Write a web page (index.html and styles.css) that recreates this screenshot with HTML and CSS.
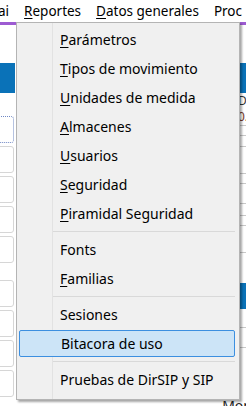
FILE: index.html
```html
<!DOCTYPE html>
<html lang="es">
<head>
  <meta charset="UTF-8">
  <title>Reportes</title>
  <link rel="stylesheet" href="styles.css">
</head>
<body>
  <div class="menubar">
    <span class="mb-item first">ai</span>
    <span class="mb-item"><u>R</u>eportes</span>
    <span class="mb-item"><u>D</u>atos generales</span>
    <span class="mb-item">Proc</span>
  </div>
  <div class="accent"></div>

  <div class="workspace">
    <div class="pane left">
      <div class="bluebar"></div>
      <div class="fields">
        <div class="field focus"></div>
        <div class="field"></div>
        <div class="field"></div>
        <div class="field"></div>
        <div class="field"></div>
      </div>
      <div class="fields second">
        <div class="field"></div>
        <div class="field"></div>
        <div class="field"></div>
        <div class="field"></div>
      </div>
    </div>
    <div class="pane right">
      <div class="bluebar"></div>
      <div class="cell">D</div>
      <div class="cell red">0.</div>
      <div class="rule r1"></div>
      <div class="rule r2"></div>
      <div class="rule r3"></div>
      <div class="rule r4"></div>
      <div class="rule r5"></div>
      <div class="rule r6"></div>
      <div class="rule r7"></div>
      <div class="rule r8"></div>
      <div class="rule r9"></div>
      <div class="bluebar small"></div>
      <div class="rule r10"></div>
      <div class="rule r11"></div>
    </div>
  </div>
  <div class="peek">Mon</div>

  <!-- menu desplegado de Reportes -->
  <div class="dropdown">
    <div class="item"><span><u>P</u>arámetros</span></div>
    <div class="item"><span><u>T</u>ipos de movimiento</span></div>
    <div class="item"><span><u>U</u>nidades de medida</span></div>
    <div class="item"><span><u>A</u>lmacenes</span></div>
    <div class="item"><span><u>U</u>suarios</span></div>
    <div class="item"><span><u>S</u>eguridad</span></div>
    <div class="item"><span><u>P</u>iramidal Seguridad</span></div>
    <div class="sep"></div>
    <div class="item"><span>Fonts</span></div>
    <div class="item"><span><u>F</u>amilias</span></div>
    <div class="sep"></div>
    <div class="item"><span>Sesiones</span></div>
    <div class="item active"><span>Bitacora de uso</span></div>
    <div class="sep"></div>
    <div class="item"><span>Pruebas de DirSIP y SIP</span></div>
  </div>
</body>
</html>
```

FILE: styles.css
```css
body {
  margin: 0; width: 246px; height: 406px; overflow: hidden; position: relative;
  background: #fff; color: #000;
  font-family: "Noto Sans", "Open Sans", sans-serif; font-size: 14px;
}
u { text-decoration-thickness: 1px; text-underline-offset: 2px; }

.menubar {
  display: flex; height: 22px; align-items: center; white-space: nowrap;
  background: #fff; overflow: hidden; font-size: 13.5px;
}
.mb-item { padding: 0 7.5px; line-height: 22px; }
.mb-item.first { padding-left: 0; margin-left: -2px; }
.accent { height: 3px; background: #9d5bd2; }

.workspace { display: flex; justify-content: space-between; height: 381px; }
.pane { overflow: hidden; position: relative; }
.pane.left { width: 15px; padding-top: 38px; }
.pane.right { width: 7px; padding-top: 38px; }
.bluebar { height: 30px; background: #0a72b8; }
.bluebar.small { height: 26px; margin-top: 30px; }

.fields { display: flex; flex-direction: column; gap: 3px; margin-top: 23px; }
.fields.second { margin-top: 17px; }
.field {
  height: 25px; width: 20px; margin-left: -8px;
  border: 1px solid #d6d6d6; border-radius: 3px; background: #fff;
}
.field.focus { border: 1px dotted #6f87c4; }

.cell { font-size: 12px; height: 16px; line-height: 16px; color: #333; margin-left: -1px; overflow: hidden; }
.cell.red { color: #7a3a2a; }
.rule { height: 1px; background: #c8c8c8; margin-top: 9px; }
.rule.r1 { margin-top: 0; }
.rule.r3 { margin-top: 10px; }
.rule.r4 { margin-top: 26px; }
.rule.r6 { margin-top: 19px; }
.rule.r7 { margin-top: 11px; }
.rule.r9 { margin-top: 26px; }
.rule.r10 { margin-top: 18px; }
.rule.r11 { margin-top: 19px; }

.peek {
  position: absolute; right: -6px; bottom: -9px;
  font-size: 14px; color: #222;
}

.dropdown {
  position: absolute; left: 16px; top: 22px; width: 222px;
  padding: 2px 0 5px;
  background: #f0f0f0; border: 1px solid #b4b4b4;
  box-shadow: 2px 2px 2px rgba(0, 0, 0, 0.35);
}
.dropdown::before {
  content: ""; position: absolute; left: 35px; top: 0; bottom: 0;
  width: 1px; background: #e2e2e2;
}
.item {
  height: 29px; display: flex; align-items: center; padding-left: 43px;
  position: relative; white-space: nowrap; box-sizing: border-box;
}
.item.active {
  margin: 1px 4px 1px 2px; padding-left: 41px; height: 27px;
  background: #cce4f7; border: 1px solid #3c8fe0; border-radius: 2px;
}
.sep { height: 7px; display: flex; align-items: center; padding: 0 4px 0 36px; }
.sep::after { content: ""; flex: 1; height: 1px; background: #d9d9d9; }
```
